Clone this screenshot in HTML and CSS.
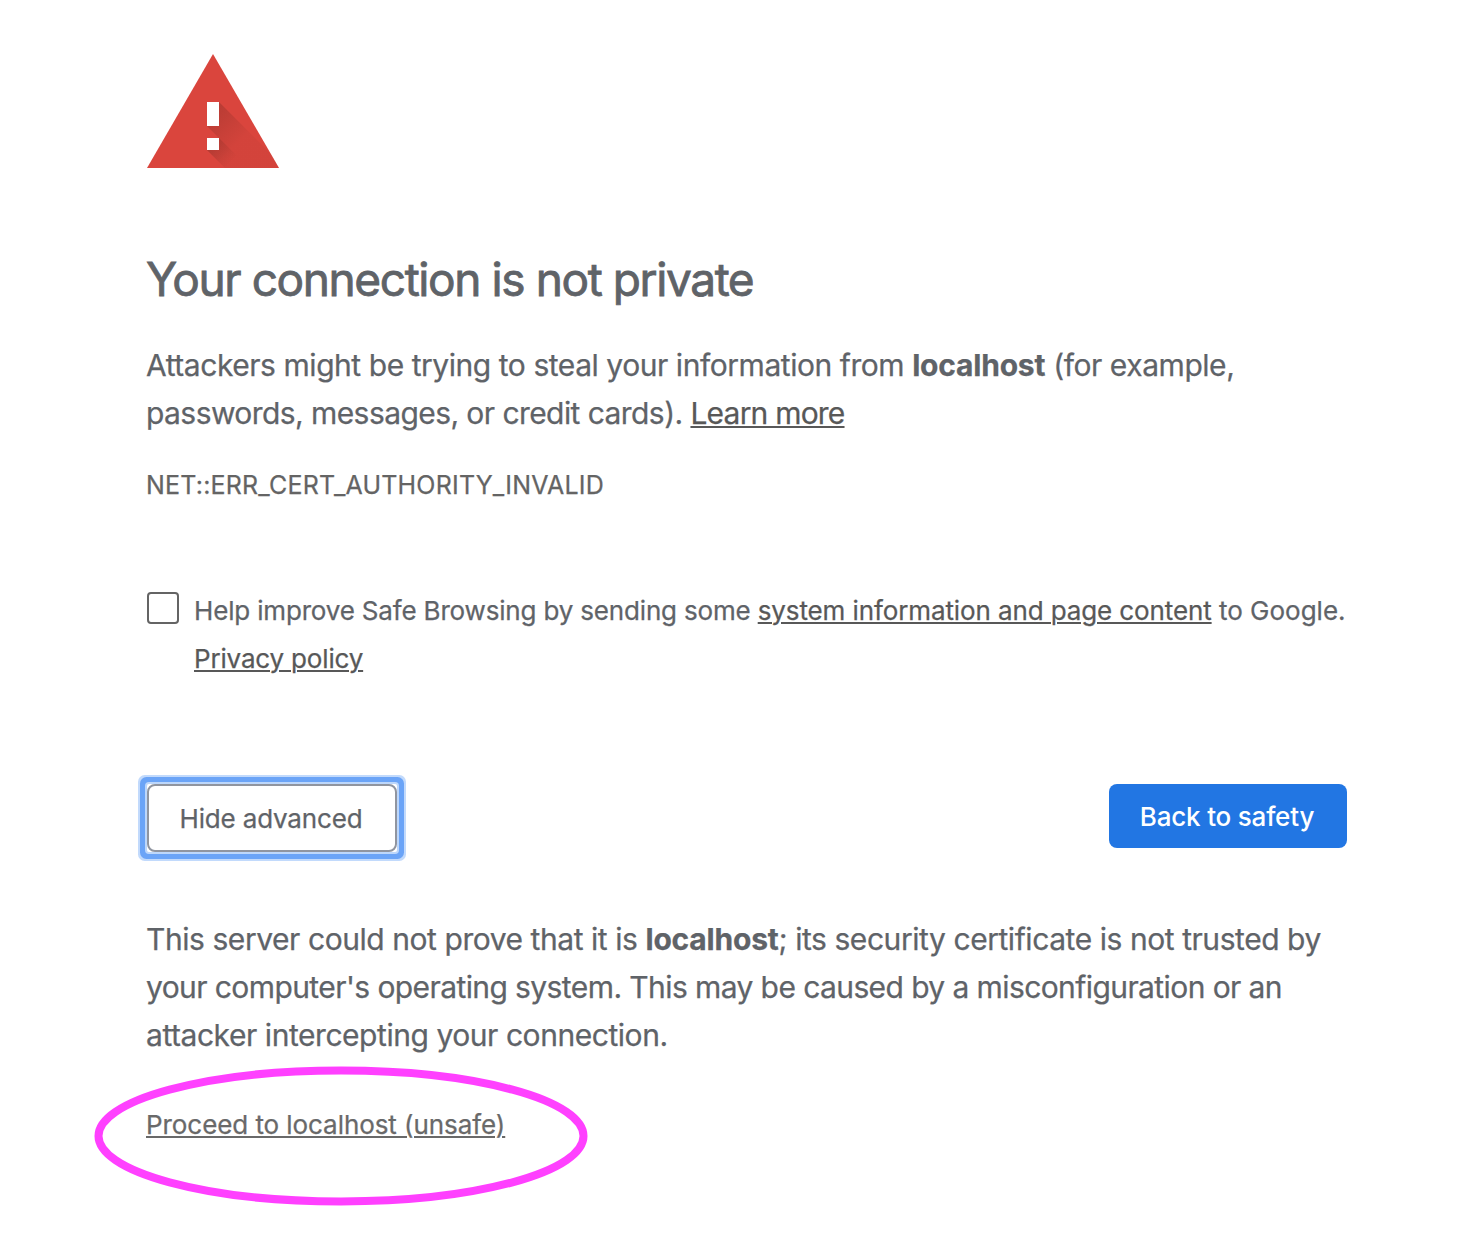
FILE: index.html
```html
<!DOCTYPE html>
<html lang="en">
<head>
<meta charset="utf-8">
<title>Privacy error</title>
<link rel="stylesheet" href="styles.css">
</head>
<body>
<main class="page">
  <svg class="warning-icon" viewBox="0 0 132 114" aria-hidden="true">
    <defs>
      <linearGradient id="shade-bar" gradientUnits="userSpaceOnUse" x1="66" y1="60" x2="93" y2="87">
        <stop offset="0" stop-color="#a93830" stop-opacity=".65"/>
        <stop offset="1" stop-color="#a93830" stop-opacity=".14"/>
      </linearGradient>
      <linearGradient id="shade-dot" gradientUnits="userSpaceOnUse" x1="66" y1="90" x2="84" y2="108">
        <stop offset="0" stop-color="#a93830" stop-opacity=".65"/>
        <stop offset="1" stop-color="#a93830" stop-opacity="0"/>
      </linearGradient>
      <clipPath id="triangle"><path d="M66 0 132 114H0Z"/></clipPath>
    </defs>
    <path fill="#da453d" d="M66 0 132 114H0Z"/>
    <g clip-path="url(#triangle)">
      <path fill="url(#shade-bar)" d="M72 48 138 114H78L60 96V84H72L60 72Z"/>
      <path fill="url(#shade-dot)" d="M72 84 102 114H78L60 96Z"/>
    </g>
    <path fill="#fff" d="M60 48H72V72H60ZM60 84H72V96H60Z"/>
  </svg>
  <h1 class="title">Your connection is not private</h1>
  <p class="body-text message"><span class="m1">Attackers might be trying to steal your information from <strong>localhost</strong> (for example,</span><br><span class="m2">passwords, messages, or credit cards). <a class="learn" href="#">Learn more</a></span></p>
  <div class="error-code">NET::ERR_CERT_AUTHORITY_INVALID</div>
  <div class="opt-in">
    <span class="checkbox"></span>
    <p class="opt-text">Help improve Safe Browsing by sending some <a class="info" href="#">system information and page content</a><span class="tail"> to Google.</span><br><a href="#">Privacy policy</a></p>
  </div>
  <div class="actions">
    <div class="focus-ring"><button class="button secondary">Hide advanced</button></div>
    <button class="button primary">Back to safety</button>
  </div>
  <p class="body-text details"><span class="d1">This server could not prove that it is <strong>localhost</strong>; its security certificate is not trusted by</span><br><span class="d2">your computer's operating system. This may be caused by a misconfiguration or an</span><br><span class="d3">attacker intercepting your connection.</span></p>
  <div class="proceed"><a href="#">Proceed to localhost (unsafe)</a>
    <svg class="highlight" viewBox="0 0 494 140" aria-hidden="true"><ellipse cx="247" cy="70" rx="242.5" ry="65.5"/></svg>
  </div>
</main>
</body>
</html>
```
FILE: styles.css
```css
* { box-sizing: border-box; }
body { margin: 0; background: #fff; color: #5f6368; font-family: Inter, "Liberation Sans", sans-serif; -webkit-text-stroke: .25px currentColor; }
.page { width: 1201px; min-height: 1247px; margin-left: 146px; padding-top: 54px; white-space: nowrap; }
.warning-icon { display: block; width: 132px; height: 114px; margin-left: 1px; }
.title { margin: 82px 0 0; font-size: 46px; font-weight: 400; line-height: 58px; letter-spacing: -1.4px; -webkit-text-stroke-width: .8px; }
.body-text { margin: 0; font-size: 30px; line-height: 48px; }
.message { margin-top: 33px; }
.m1 { letter-spacing: -.45px; }
.m2 { letter-spacing: -.57px; }
.learn { letter-spacing: -.8px; }
.d1 { letter-spacing: -.44px; }
.d2 { letter-spacing: -.59px; }
.d3 { letter-spacing: -.45px; }
strong { font-weight: 700; letter-spacing: -.2px; }
a { color: #585858; text-decoration: underline; text-decoration-thickness: 2px; text-underline-offset: 2px; }
.error-code { margin-top: 32px; color: #646464; font-size: 25px; line-height: 32px; letter-spacing: .2px; }
.opt-in { display: flex; gap: 15px; margin: 86px 0 0 1px; }
.checkbox { flex: none; width: 32px; height: 32px; margin-top: 5px; border: 2px solid #646464; border-radius: 4px; }
.opt-text { margin: 0; font-size: 26px; line-height: 48px; letter-spacing: -.17px; }
.info { letter-spacing: -.11px; }
.tail { letter-spacing: 0; }
.actions { display: flex; justify-content: space-between; align-items: flex-start; margin: 101px 0 0 1px; }
.focus-ring { border-radius: 2px; background: #fff; box-shadow: 0 0 0 2px #bdd7fb, 0 0 0 7px #6ba4f7, 0 0 0 9px #c2dafc; }
.button { display: block; font-family: Inter, "Liberation Sans", sans-serif; font-size: 26px; border-radius: 8px; }
.secondary { width: 250px; height: 68px; padding: 0 2px 0 0; border: 2px solid #9095a0; background: #fff; color: #5f6368; font-weight: 400; letter-spacing: -.17px; }
.primary { width: 238px; height: 64px; padding: 0 2px 0 0; border: 0; background: #2276e3; color: #fff; font-weight: 500; letter-spacing: -.2px; -webkit-text-stroke-width: 0; }
.details { margin-top: 63px; }
.proceed { position: relative; margin-top: 50px; font-size: 26px; line-height: 32px; letter-spacing: -.07px; }
.proceed a { color: #696969; }
.highlight { position: absolute; left: -52px; top: -43px; width: 494px; height: 140px; overflow: visible; fill: none; stroke: #ff40ff; stroke-width: 8; }
```
